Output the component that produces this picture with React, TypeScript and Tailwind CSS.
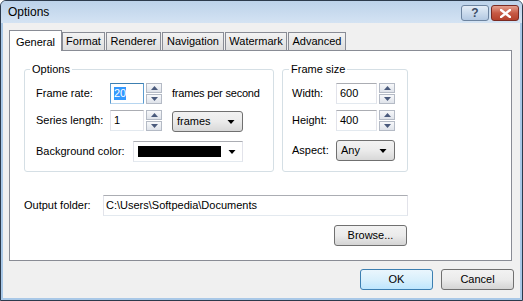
import React from 'react';

const font = { fontFamily: '"Liberation Sans", Arial, sans-serif' };

function Arrow({ up, className = '' }: { up?: boolean; className?: string }) {
  return (
    <svg width="7" height="4" viewBox="0 0 7 4" className={className}>
      <path d={up ? 'M0 4 L3.5 0 L7 4 Z' : 'M0 0 L7 0 L3.5 4 Z'} fill="currentColor" />
    </svg>
  );
}

function SpinBtn({ up }: { up?: boolean }) {
  return (
    <div className="flex h-[10px] items-center justify-center border border-[#b4bac5] bg-linear-to-b from-[#f7f8fa] to-[#dfe3ea] text-[#4a5a7c]">
      <Arrow up={up} />
    </div>
  );
}

function Spin({ value, width, focus }: { value: string; width: number; focus?: boolean }) {
  return (
    <div className="flex h-[21px]" style={{ width }}>
      <div
        className={`flex flex-1 items-center border pl-[3px] bg-white ${
          focus ? 'border-[#5b9bd0] border-t-[#3c7fb1] border-b-[#b7d6f0]' : 'border-[#e2e3ea] border-t-[#abadb3] border-b-[#e3e9ef]'
        }`}
      >
        {focus ? <span className="bg-[#3399ff] text-white leading-[13px]">{value}</span> : value}
      </div>
      <div className="ml-[2px] flex w-[16px] flex-col gap-px">
        <SpinBtn up />
        <SpinBtn />
      </div>
    </div>
  );
}

function DropBtn({ label, width }: { label: string; width: number }) {
  return (
    <div
      className="flex h-[21px] items-center justify-between rounded-[3px] border border-[#707070] bg-linear-to-b from-[#f2f2f2] via-[#ebebeb] to-[#d8d8d8] pl-[4px] pr-[7px]"
      style={{ width }}
    >
      <span>{label}</span>
      <Arrow className="text-black w-[8px] h-[4px]" />
    </div>
  );
}

function Button({ label, primary }: { label: string; primary?: boolean }) {
  return (
    <div
      className={`flex h-[21px] w-[73px] items-center justify-center rounded-[3px] border ${
        primary
          ? 'border-[#3c7fb1] bg-linear-to-b from-[#eaf6fd] via-[#d9f0fc] to-[#bee6fd]'
          : 'border-[#707070] bg-linear-to-b from-[#f2f2f2] via-[#ebebeb] to-[#d4d4d4]'
      }`}
    >
      {label}
    </div>
  );
}

const tabs = [
  { name: 'Format', w: 43 },
  { name: 'Renderer', w: 55 },
  { name: 'Navigation', w: 62 },
  { name: 'Watermark', w: 62 },
  { name: 'Advanced', w: 58 },
];

export default function App() {
  return (
    <div className="h-[301px] w-[523px] overflow-hidden bg-white" style={font}>
      <div className="flex h-[301px] w-[523px] flex-col rounded-t-[6px] border border-[#2c3a4c] bg-[#a9c8e7]">
        {/* Title bar */}
        <div className="flex h-[22px] items-center rounded-t-[5px] bg-linear-to-b from-[#bcd2ea] to-[#d4e3f3] pl-[7px] pr-[3px]">
          <span className="text-[12px] text-black">Options</span>
          <div className="ml-auto flex gap-[2px] self-start pt-[4px]">
            <div className="flex h-[16px] w-[28px] items-center justify-center rounded-[3px] border border-[#6d84a0] bg-linear-to-b from-[#e4edf7] to-[#b3c9e2] text-[12px] font-bold text-[#3c4c66]">
              ?
            </div>
            <div className="flex h-[16px] w-[28px] items-center justify-center rounded-[3px] border border-[#7a2a22] bg-linear-to-b from-[#e4a090] via-[#c75a45] to-[#b4412c]">
              <svg width="11" height="9" viewBox="0 0 11 9">
                <path d="M1 1 L10 8 M10 1 L1 8" stroke="white" strokeWidth="2.4" strokeLinecap="square" />
              </svg>
            </div>
          </div>
        </div>

        {/* Client area */}
        <div className="mx-[2px] mb-[2px] flex flex-1 flex-col bg-[#f0f0f0] text-[11px] text-black">
          {/* Tabs */}
          <div className="flex items-end pl-[6px] pt-[7px]">
            <div className="relative z-10 -mb-px flex h-[21px] w-[53px] items-start justify-center border border-b-0 border-[#898c95] bg-white pt-[3px] text-[11px]">
              General
            </div>
            {tabs.map((t, i) => (
              <div
                key={t.name}
                className={`flex h-[18px] items-center justify-center border border-b-0 border-[#898c95] bg-linear-to-b from-[#f3f3f3] to-[#dedede] ${
                  i === 0 ? '' : 'ml-px'
                }`}
                style={{ width: t.w }}
              >
                {t.name}
              </div>
            ))}
          </div>

          {/* Panel */}
          <div className="ml-[6px] flex h-[211px] w-[503px] flex-col border border-[#898c95] bg-white pl-[14px] pt-[12px]">
            <div className="flex gap-[8px]">
              <fieldset className="h-[109px] w-[250px] rounded-[3px] border border-[#d5dfe5] px-0">
                <legend className="ml-[5px] h-[12px] px-[2px] leading-[12px]">Options</legend>
                <div className="flex flex-col pl-[11px] pt-[8px]">
                  <div className="flex h-[21px] items-center">
                    <span className="w-[74px]">Frame rate:</span>
                    <Spin value="20" width={52} focus />
                    <span className="ml-[10px] tracking-[-0.2px]">frames per second</span>
                  </div>
                  <div className="mt-[6px] flex h-[21px] items-center">
                    <span className="w-[74px]">Series length:</span>
                    <Spin value="1" width={52} />
                    <div className="ml-[10px] mt-[2px]">
                      <DropBtn label="frames" width={71} />
                    </div>
                  </div>
                  <div className="mt-[10px] flex h-[21px] items-center">
                    <span className="w-[97px]">Background color:</span>
                    <div className="flex h-[21px] w-[110px] items-center border border-[#e2e3ea] border-t-[#abadb3] border-b-[#e3e9ef] bg-white pl-[4px] pr-[6px]">
                      <div className="h-[11px] w-[83px] bg-black" />
                      <Arrow className="ml-auto w-[8px] h-[4px] text-black" />
                    </div>
                  </div>
                </div>
              </fieldset>

              <fieldset className="h-[109px] w-[126px] rounded-[3px] border border-[#d5dfe5] px-0">
                <legend className="ml-[6px] h-[12px] px-[2px] leading-[12px]">Frame size</legend>
                <div className="flex flex-col pl-[9px] pt-[8px]">
                  <div className="flex h-[21px] items-center">
                    <span className="w-[44px]">Width:</span>
                    <Spin value="600" width={59} />
                  </div>
                  <div className="mt-[6px] flex h-[21px] items-center">
                    <span className="w-[44px]">Height:</span>
                    <Spin value="400" width={59} />
                  </div>
                  <div className="mt-[9px] flex h-[21px] items-center">
                    <span className="w-[44px]">Aspect:</span>
                    <DropBtn label="Any" width={59} />
                  </div>
                </div>
              </fieldset>
            </div>

            <div className="mt-[23px] flex h-[21px] w-[384px] items-center">
              <span className="w-[79px]">Output folder:</span>
              <div className="flex h-[21px] flex-1 items-center border border-[#e2e3ea] border-t-[#abadb3] border-b-[#e3e9ef] bg-white pl-[2px]">
                C:\Users\Softpedia\Documents
              </div>
            </div>
            <div className="mt-[9px] flex w-[383px] justify-end">
              <Button label="Browse..." />
            </div>
          </div>

          {/* Dialog buttons */}
          <div className="mt-[8px] flex justify-end gap-[8px] pr-[6px]">
            <Button label="OK" primary />
            <Button label="Cancel" />
          </div>
        </div>
      </div>
    </div>
  );
}
